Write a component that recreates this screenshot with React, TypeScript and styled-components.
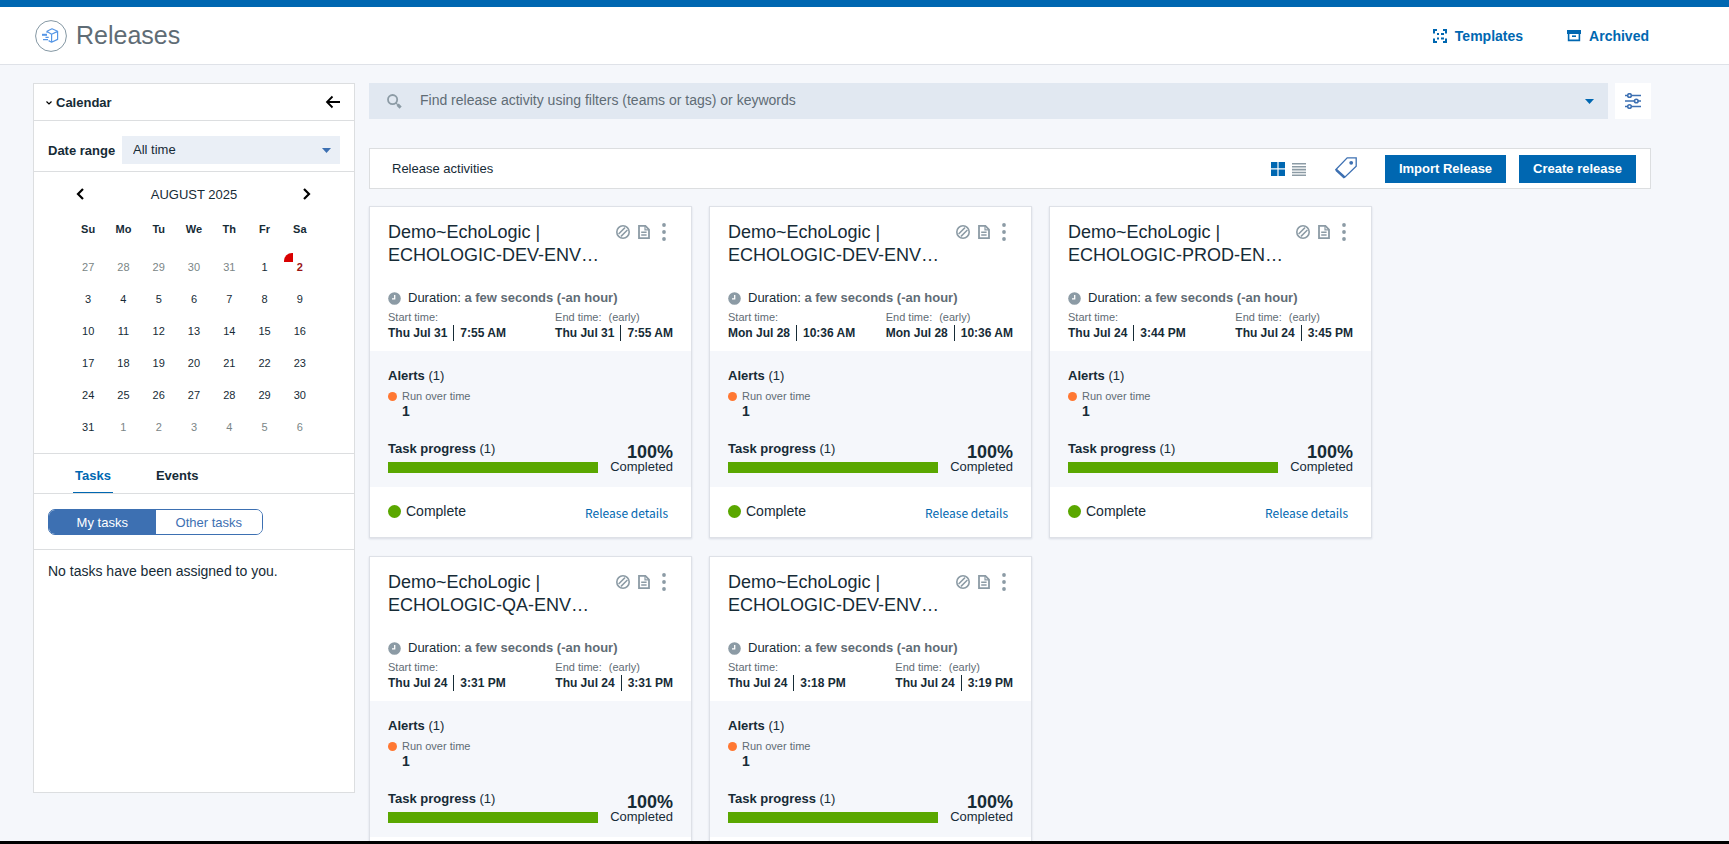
import React from "react";
import styled, { createGlobalStyle, css } from "styled-components";

const color = {
  ink: "#162b36",
  muted: "#5f6c75",
  icon: "#8c9ba5",
  line: "#dcdee0",
  page: "#f5f7fb",
  blue: "#0067b1",
  softBlue: "#3d70b2",
  field: "#e1e8f1",
  green: "#5aa700",
  orange: "#ff7832",
  red: "#d90000",
};

const GlobalStyle = createGlobalStyle`
  *, *::before, *::after { box-sizing: border-box; }
  body {
    margin: 0;
    color: ${color.ink};
    background: ${color.page};
    font: 13px/16px "Liberation Sans", Arial, sans-serif;
  }
  button, input, select { font: inherit; color: inherit; margin: 0; }
  button { padding: 0; border: 0; background: none; cursor: pointer; }
  h1, h2, h3, p, ul, dl, dd { margin: 0; padding: 0; }
  svg { display: block; flex: none; }
`;

const Shell = styled.div`
  display: flex;
  flex-direction: column;
  height: 100vh;
  border-top: 7px solid ${color.blue};
  border-bottom: 3px solid #000;
`;

const Header = styled.header`
  display: flex;
  align-items: center;
  justify-content: space-between;
  flex: none;
  height: 58px;
  padding: 0 80px 0 35px;
  background: #fff;
  border-bottom: 1px solid #dfe2e8;
`;

const Brand = styled.div`
  display: flex;
  align-items: center;
  gap: 9px;
`;

const PageTitle = styled.h1`
  padding-bottom: 2px;
  font-size: 25px;
  line-height: 30px;
  font-weight: 400;
  color: ${color.muted};
`;

const HeaderNav = styled.nav`
  display: flex;
  gap: 44px;
`;

const HeaderLink = styled.a`
  display: flex;
  align-items: center;
  gap: 8px;
  font-size: 14px;
  font-weight: 700;
  color: ${color.blue};
  text-decoration: none;
`;

const Main = styled.main`
  display: flex;
  flex: 1;
  gap: 10px;
  min-height: 0;
  padding: 18px 78px 0 33px;
`;

const Sidebar = styled.aside`
  display: flex;
  flex-direction: column;
  flex: none;
  width: 322px;
  margin-bottom: 48px;
  background: #fff;
  border: 1px solid ${color.line};
`;

const PanelHead = styled.div`
  display: flex;
  align-items: center;
  justify-content: space-between;
  height: 37px;
  padding: 0 14px 0 12px;
  border-bottom: 1px solid ${color.line};
`;

const CollapseButton = styled.button`
  display: flex;
  align-items: center;
  gap: 4px;
  padding-top: 2px;
  font-weight: 700;
`;

const RangeRow = styled.div`
  display: flex;
  align-items: center;
  justify-content: space-between;
  padding: 15px 14px 7px;
  border-bottom: 1px solid ${color.line};
`;

const RangeLabel = styled.label`
  padding-top: 2px;
  font-weight: 700;
`;

const SelectWrap = styled.div`
  display: grid;
  align-items: center;
  width: 218px;
  > * { grid-area: 1 / 1; }
  > svg { justify-self: end; margin-right: 9px; pointer-events: none; }
`;

const RangeSelect = styled.select`
  appearance: none;
  width: 100%;
  height: 28px;
  padding: 0 28px 0 11px;
  border: 0;
  border-radius: 0;
  background: #eaeff6;
`;

const CalendarSection = styled.section`
  display: flex;
  flex-direction: column;
  align-items: center;
  padding: 12px 0 10px;
  border-bottom: 1px solid ${color.line};
`;

const MonthBar = styled.div`
  display: flex;
  align-items: center;
  justify-content: space-between;
  width: 239px;
  height: 22px;
`;

const MonthTable = styled.table`
  width: 247px;
  table-layout: fixed;
  border-collapse: collapse;
  font-size: 11px;
  text-align: center;
  th, td { padding: 0; }
  th { height: 45px; padding-top: 1px; }
`;

const DayCell = styled.td<{ $muted: boolean; $today: boolean }>`
  position: relative;
  height: 32px;
  color: ${(p) => (p.$muted ? "#7a8586" : color.ink)};
  ${(p) =>
    p.$today &&
    css`
      color: #9a1414;
      font-weight: 700;
      &::before {
        content: "";
        position: absolute;
        top: 2px;
        left: 2px;
        width: 9px;
        height: 9px;
        border-top-left-radius: 8px;
        background: ${color.red};
      }
    `}
`;

const Tabs = styled.div`
  display: flex;
  gap: 41px;
  height: 40px;
  padding-left: 39px;
  border-bottom: 1px solid ${color.line};
`;

const Tab = styled.button<{ $active?: boolean }>`
  padding: 5px 2px 0;
  font-weight: 700;
  color: ${(p) => (p.$active ? color.blue : color.ink)};
  border-bottom: 1px solid ${(p) => (p.$active ? color.blue : "transparent")};
`;

const SwitchRow = styled.div`
  padding: 15px 14px 14px;
  border-bottom: 1px solid ${color.line};
`;

const Segmented = styled.div`
  display: flex;
  width: 215px;
  height: 26px;
  overflow: hidden;
  border: 1px solid ${color.softBlue};
  border-radius: 7px;
`;

const Segment = styled.button<{ $active?: boolean }>`
  flex: 1;
  padding-top: 2px;
  color: ${(p) => (p.$active ? "#fff" : color.softBlue)};
  background: ${(p) => (p.$active ? color.softBlue : "#fff")};
`;

const EmptyNote = styled.p`
  padding: 13px 14px;
  font-size: 14px;
`;

const Content = styled.div`
  flex: 1;
  min-width: 0;
  padding: 0 0 18px 4px;
  overflow-y: auto;
  scrollbar-width: none;
`;

const SearchRow = styled.form`
  display: flex;
  gap: 7px;
  height: 36px;
`;

const SearchBox = styled.div`
  display: flex;
  align-items: center;
  flex: 1;
  gap: 18px;
  padding: 0 14px 0 18px;
  background: ${color.field};
`;

const SearchInput = styled.input`
  flex: 1;
  height: 34px;
  padding: 0 0 2px;
  border: 0;
  outline: 0;
  background: none;
  font-size: 14px;
  &::placeholder { color: ${color.muted}; opacity: 1; }
`;

const FilterButton = styled.button`
  display: grid;
  place-items: center;
  width: 36px;
  background: #fff;
`;

const Toolbar = styled.div`
  display: flex;
  align-items: center;
  justify-content: space-between;
  height: 41px;
  margin: 29px 0 17px;
  padding: 0 14px 0 22px;
  background: #fff;
  border: 1px solid ${color.line};
`;

const ToolbarTitle = styled.h2`
  font-size: 13px;
  font-weight: 400;
`;

const ToolbarActions = styled.div`
  display: flex;
  align-items: center;
`;

const ViewToggle = styled.div`
  display: flex;
  gap: 7px;
  margin-right: 29px;
`;

const PrimaryButton = styled.button`
  height: 28px;
  margin-left: 13px;
  padding: 0 14px;
  font-weight: 700;
  color: #fff;
  background: ${color.blue};
`;

const TagButton = styled.button`
  margin-right: 15px;
  padding-bottom: 2px;
`;

const CardGrid = styled.div`
  display: grid;
  grid-template-columns: repeat(auto-fill, 323px);
  gap: 18px 17px;
`;

const Card = styled.article`
  background: #fff;
  border: 1px solid #dee1e7;
  box-shadow: 0 1px 2px rgba(40, 60, 90, 0.14);
`;

const CardTop = styled.div`
  height: 144px;
  padding: 14px 18px 0;
`;

const CardHead = styled.div`
  display: flex;
  justify-content: space-between;
  height: 69px;
`;

const CardTitle = styled.h3`
  font-size: 18px;
  line-height: 23px;
  font-weight: 400;
  white-space: nowrap;
`;

const CardTools = styled.div`
  display: flex;
  align-items: center;
  height: 22px;
  padding-right: 7px;
  button + button { margin-left: 8px; }
  button:last-child { margin-left: 12px; }
`;

const Duration = styled.p`
  display: flex;
  align-items: center;
  gap: 7px;
  strong { color: ${color.muted}; }
`;

const Times = styled.dl`
  display: flex;
  justify-content: space-between;
  padding-top: 3px;
`;

const TimeLabel = styled.dt`
  font-size: 11px;
  color: ${color.muted};
  span { margin-left: 7px; }
`;

const TimeValue = styled.dd`
  display: flex;
  font-size: 12px;
  font-weight: 700;
  time + time {
    margin-left: 6px;
    padding-left: 6px;
    border-left: 1px solid ${color.ink};
  }
`;

const CardBody = styled.div`
  display: flex;
  flex-direction: column;
  justify-content: space-between;
  height: 136px;
  padding: 17px 18px 14px;
  background: ${color.page};
`;

const AlertLine = styled.p`
  display: flex;
  align-items: center;
  gap: 5px;
  padding-top: 4px;
  font-size: 11px;
  color: ${color.muted};
`;

const Dot = styled.span<{ $size: number; $color: string }>`
  width: ${(p) => p.$size}px;
  height: ${(p) => p.$size}px;
  border-radius: 50%;
  background: ${(p) => p.$color};
`;

const AlertCount = styled.p`
  padding-left: 14px;
  font-size: 14px;
  line-height: 14px;
  font-weight: 700;
`;

const ProgressRow = styled.div`
  display: flex;
  justify-content: space-between;
`;

const ProgressMain = styled.div`
  width: 210px;
  padding-top: 1px;
`;

const Track = styled.div`
  height: 11px;
  margin-top: 5px;
  background: #dce1e8;
`;

const Fill = styled.div`
  height: 100%;
  background: ${color.green};
`;

const ProgressTotal = styled.p`
  padding-top: 3px;
  text-align: right;
  strong { display: block; font-size: 18px; line-height: 18px; }
  span { display: block; line-height: 12px; }
`;

const CardFoot = styled.div`
  display: flex;
  align-items: center;
  justify-content: space-between;
  height: 50px;
  padding: 0 23px 2px 18px;
`;

const Status = styled.span`
  display: flex;
  align-items: center;
  gap: 5px;
  font-size: 14px;
`;

const DetailsLink = styled.a`
  padding-top: 3px;
  font: 12px/18px "Noto Sans CJK SC", "Noto Sans", sans-serif;
  color: ${color.blue};
  text-decoration: none;
`;

const LogoIcon = () => (
  <svg width="32" height="32" viewBox="0 0 32 32" fill="none" aria-hidden="true">
    <circle cx="16" cy="16" r="15.4" stroke="#8497a3" />
    <g stroke="#5596e6" strokeWidth="1.2" strokeLinejoin="round">
      <path d="M12 12.8v-1.6L17 8.8l5.6 2.4v8.2l-6 2.8v-8L12 11.4M16.6 14.2l6-2.8M16.6 22.2l-3-1.6" />
      <path d="M7 14.8h5" strokeWidth="2" />
      <path d="M10.5 17.4h3.2M8 19.6h5" strokeWidth="1.2" />
    </g>
  </svg>
);

const TemplatesIcon = () => (
  <svg width="14" height="14" viewBox="0 0 14 14" fill="none" stroke={color.blue} aria-hidden="true">
    <path d="M1 4.5V1h3M10 1h3v3.5M13 9.5V13h-3M4 13H1V9.5" strokeWidth="2" />
    <path d="M4 5h2M8 5h3M4 9.5h2M8 9.5h3" strokeWidth="2" />
  </svg>
);

const ArchiveIcon = () => (
  <svg width="14" height="14" viewBox="0 0 14 14" aria-hidden="true">
    <path fill={color.blue} d="M0 1h14v4H0z" />
    <path fill="none" stroke={color.blue} strokeWidth="1.6" d="M1.6 5v6.4h10.8V5" />
    <path fill={color.blue} d="M5 6.4h4v1.6H5z" />
  </svg>
);

const SearchIcon = () => (
  <svg width="15" height="15" viewBox="0 0 15 15" fill="none" stroke={color.icon} aria-hidden="true">
    <circle cx="5.6" cy="5.6" r="4.6" strokeWidth="1.8" />
    <path d="M9 9l1.8 1.8" strokeWidth="1.2" />
    <path d="M10.6 10.6l3 3" strokeWidth="3" />
  </svg>
);

const SlidersIcon = () => (
  <svg width="16" height="16" viewBox="0 0 16 16" fill="#fff" stroke={color.softBlue} aria-hidden="true">
    <path d="M0 2.5h16M0 8h16M0 13.5h16" strokeWidth="1.3" />
    <circle cx="4.5" cy="2.5" r="1.8" strokeWidth="1.6" />
    <circle cx="11.3" cy="8" r="1.8" strokeWidth="1.6" />
    <circle cx="4.5" cy="13.5" r="1.8" strokeWidth="1.6" />
  </svg>
);

const CaretIcon = ({ fill = color.softBlue }: { fill?: string }) => (
  <svg width="9" height="5" viewBox="0 0 9 5" fill={fill} aria-hidden="true">
    <path d="M0 0h9L4.5 5z" />
  </svg>
);

const Chevron = ({ d, w, h, stroke = 2 }: { d: string; w: number; h: number; stroke?: number }) => (
  <svg width={w} height={h} viewBox={`0 0 ${w} ${h}`} fill="none" stroke="#000" strokeWidth={stroke} aria-hidden="true">
    <path d={d} />
  </svg>
);

const TileIcon = () => (
  <svg width="14" height="14" viewBox="0 0 14 14" fill={color.blue} aria-hidden="true">
    <path d="M0 0h6.4v6.2H0zM7.6 0H14v6.2H7.6zM0 7.6h6.4V14H0zM7.6 7.6H14V14H7.6z" />
  </svg>
);

const ListIcon = () => (
  <svg width="14" height="14" viewBox="0 0 14 14" stroke={color.icon} strokeWidth="1.6" aria-hidden="true">
    <path d="M0 1.8h14M0 4.7h14M0 7.6h14M0 10.5h14M0 13.2h14" />
  </svg>
);

const TagIcon = () => (
  <svg width="22" height="22" viewBox="0 0 22 22" fill="none" stroke={color.softBlue} aria-hidden="true">
    <path d="M12.2.8h9v8.4l-11.6 11.2L.9 12.6z" strokeWidth="1.3" />
    <path d="M1.2 12.9l8.4 7.6" strokeWidth="2.6" />
    <circle cx="16.2" cy="5.8" r="1.9" fill={color.softBlue} stroke="none" />
  </svg>
);

const RiskIcon = () => (
  <svg width="14" height="14" viewBox="0 0 14 14" fill="none" stroke={color.icon} strokeWidth="1.6" aria-hidden="true">
    <circle cx="7" cy="7" r="6.2" />
    <path d="M2.6 9L9 2.6M5 11.4L11.4 5" strokeWidth="1.5" />
  </svg>
);

const DocIcon = () => (
  <svg width="12" height="14" viewBox="0 0 12 14" fill="none" stroke={color.icon} strokeWidth="1.8" aria-hidden="true">
    <path d="M1 .9h6.4L11 4.5v8.6H1z" />
    <path d="M7 .8v4h4" strokeWidth="1.2" />
    <path d="M3.2 7.2h5.4M3.2 9.9h5.4" strokeWidth="1.5" />
  </svg>
);

const KebabIcon = () => (
  <svg width="4" height="18" viewBox="0 0 4 18" fill={color.icon} aria-hidden="true">
    <circle cx="2" cy="2" r="1.9" />
    <circle cx="2" cy="9" r="1.9" />
    <circle cx="2" cy="16" r="1.9" />
  </svg>
);

const ClockIcon = () => (
  <svg width="13" height="13" viewBox="0 0 13 13" aria-hidden="true">
    <circle cx="6.5" cy="6.5" r="6.3" fill={color.icon} />
    <path d="M6.7 3v3.8H4" fill="none" stroke="#fff" strokeWidth="1.3" />
  </svg>
);

const weekdays = ["Su", "Mo", "Tu", "We", "Th", "Fr", "Sa"];
const firstVisibleDay = new Date(2025, 6, 27);
const weeks = Array.from({ length: 6 }, (_, week) =>
  weekdays.map((_, day) => {
    const date = new Date(firstVisibleDay);
    date.setDate(date.getDate() + week * 7 + day);
    return date;
  }),
);

interface Release {
  name: string;
  date: string;
  start: string;
  end: string;
  progress: number;
}

const releases: Release[] = [
  { name: "ECHOLOGIC-DEV-ENV…", date: "Thu Jul 31", start: "7:55 AM", end: "7:55 AM", progress: 100 },
  { name: "ECHOLOGIC-DEV-ENV…", date: "Mon Jul 28", start: "10:36 AM", end: "10:36 AM", progress: 100 },
  { name: "ECHOLOGIC-PROD-EN…", date: "Thu Jul 24", start: "3:44 PM", end: "3:45 PM", progress: 100 },
  { name: "ECHOLOGIC-QA-ENV…", date: "Thu Jul 24", start: "3:31 PM", end: "3:31 PM", progress: 100 },
  { name: "ECHOLOGIC-DEV-ENV…", date: "Thu Jul 24", start: "3:18 PM", end: "3:19 PM", progress: 100 },
];

const ReleaseCard = ({ release }: { release: Release }) => (
  <Card>
    <CardTop>
      <CardHead>
        <CardTitle>
          Demo~EchoLogic |<br />
          {release.name}
        </CardTitle>
        <CardTools>
          <button aria-label="Risk"><RiskIcon /></button>
          <button aria-label="Notes"><DocIcon /></button>
          <button aria-label="More actions"><KebabIcon /></button>
        </CardTools>
      </CardHead>
      <Duration>
        <ClockIcon />
        <span>Duration: <strong>a few seconds (-an hour)</strong></span>
      </Duration>
      <Times>
        <div>
          <TimeLabel>Start time:</TimeLabel>
          <TimeValue><time>{release.date}</time><time>{release.start}</time></TimeValue>
        </div>
        <div>
          <TimeLabel>End time:<span>(early)</span></TimeLabel>
          <TimeValue><time>{release.date}</time><time>{release.end}</time></TimeValue>
        </div>
      </Times>
    </CardTop>
    <CardBody>
      <div>
        <p><strong>Alerts</strong> (1)</p>
        <AlertLine><Dot $size={9} $color={color.orange} />Run over time</AlertLine>
        <AlertCount>1</AlertCount>
      </div>
      <ProgressRow>
        <ProgressMain>
          <p><strong>Task progress</strong> (1)</p>
          <Track role="progressbar" aria-label="Task progress" aria-valuenow={release.progress}>
            <Fill style={{ width: `${release.progress}%` }} />
          </Track>
        </ProgressMain>
        <ProgressTotal>
          <strong>{release.progress}%</strong>
          <span>Completed</span>
        </ProgressTotal>
      </ProgressRow>
    </CardBody>
    <CardFoot>
      <Status><Dot $size={13} $color={color.green} />Complete</Status>
      <DetailsLink href="#details">Release details</DetailsLink>
    </CardFoot>
  </Card>
);

export default function App() {
  return (
    <>
      <GlobalStyle />
      <Shell>
        <Header>
          <Brand>
            <LogoIcon />
            <PageTitle>Releases</PageTitle>
          </Brand>
          <HeaderNav>
            <HeaderLink href="#templates"><TemplatesIcon />Templates</HeaderLink>
            <HeaderLink href="#archived"><ArchiveIcon />Archived</HeaderLink>
          </HeaderNav>
        </Header>
        <Main>
          <Sidebar>
            <PanelHead>
              <CollapseButton>
                <Chevron w={6} h={6} d="M.5 1.5L3 4l2.5-2.5" stroke={1.2} />
                Calendar
              </CollapseButton>
              <button aria-label="Hide panel">
                <Chevron w={15} h={14} d="M7.5 1.5L2 7l5.5 5.5M2 7h13" stroke={1.8} />
              </button>
            </PanelHead>
            <RangeRow>
              <RangeLabel htmlFor="range">Date range</RangeLabel>
              <SelectWrap>
                <RangeSelect id="range" defaultValue="all">
                  <option value="all">All time</option>
                </RangeSelect>
                <CaretIcon />
              </SelectWrap>
            </RangeRow>
            <CalendarSection>
              <MonthBar>
                <button aria-label="Previous month"><Chevron w={12} h={14} d="M8 1L3 6l5 5" stroke={2.2} /></button>
                <span>AUGUST 2025</span>
                <button aria-label="Next month"><Chevron w={12} h={14} d="M2 1l5 5-5 5" stroke={2.2} /></button>
              </MonthBar>
              <MonthTable>
                <thead>
                  <tr>{weekdays.map((day) => <th key={day} scope="col">{day}</th>)}</tr>
                </thead>
                <tbody>
                  {weeks.map((week) => (
                    <tr key={week[0].getTime()}>
                      {week.map((date) => (
                        <DayCell
                          key={date.getTime()}
                          $muted={date.getMonth() !== 7}
                          $today={date.getMonth() === 7 && date.getDate() === 2}
                        >
                          {date.getDate()}
                        </DayCell>
                      ))}
                    </tr>
                  ))}
                </tbody>
              </MonthTable>
            </CalendarSection>
            <Tabs role="tablist">
              <Tab role="tab" aria-selected="true" $active>Tasks</Tab>
              <Tab role="tab" aria-selected="false">Events</Tab>
            </Tabs>
            <SwitchRow>
              <Segmented>
                <Segment $active>My tasks</Segment>
                <Segment>Other tasks</Segment>
              </Segmented>
            </SwitchRow>
            <EmptyNote>No tasks have been assigned to you.</EmptyNote>
          </Sidebar>
          <Content>
            <SearchRow>
              <SearchBox>
                <SearchIcon />
                <SearchInput
                  type="text"
                  aria-label="Find release activity"
                  placeholder="Find release activity using filters (teams or tags) or keywords"
                />
                <button type="button" aria-label="Show filters"><CaretIcon fill={color.blue} /></button>
              </SearchBox>
              <FilterButton type="button" aria-label="Filter settings"><SlidersIcon /></FilterButton>
            </SearchRow>
            <Toolbar>
              <ToolbarTitle>Release activities</ToolbarTitle>
              <ToolbarActions>
                <ViewToggle>
                  <button aria-label="Tile view"><TileIcon /></button>
                  <button aria-label="List view"><ListIcon /></button>
                </ViewToggle>
                <TagButton aria-label="Tags"><TagIcon /></TagButton>
                <PrimaryButton>Import Release</PrimaryButton>
                <PrimaryButton>Create release</PrimaryButton>
              </ToolbarActions>
            </Toolbar>
            <CardGrid>
              {releases.map((release, index) => <ReleaseCard key={index} release={release} />)}
            </CardGrid>
          </Content>
        </Main>
      </Shell>
    </>
  );
}
